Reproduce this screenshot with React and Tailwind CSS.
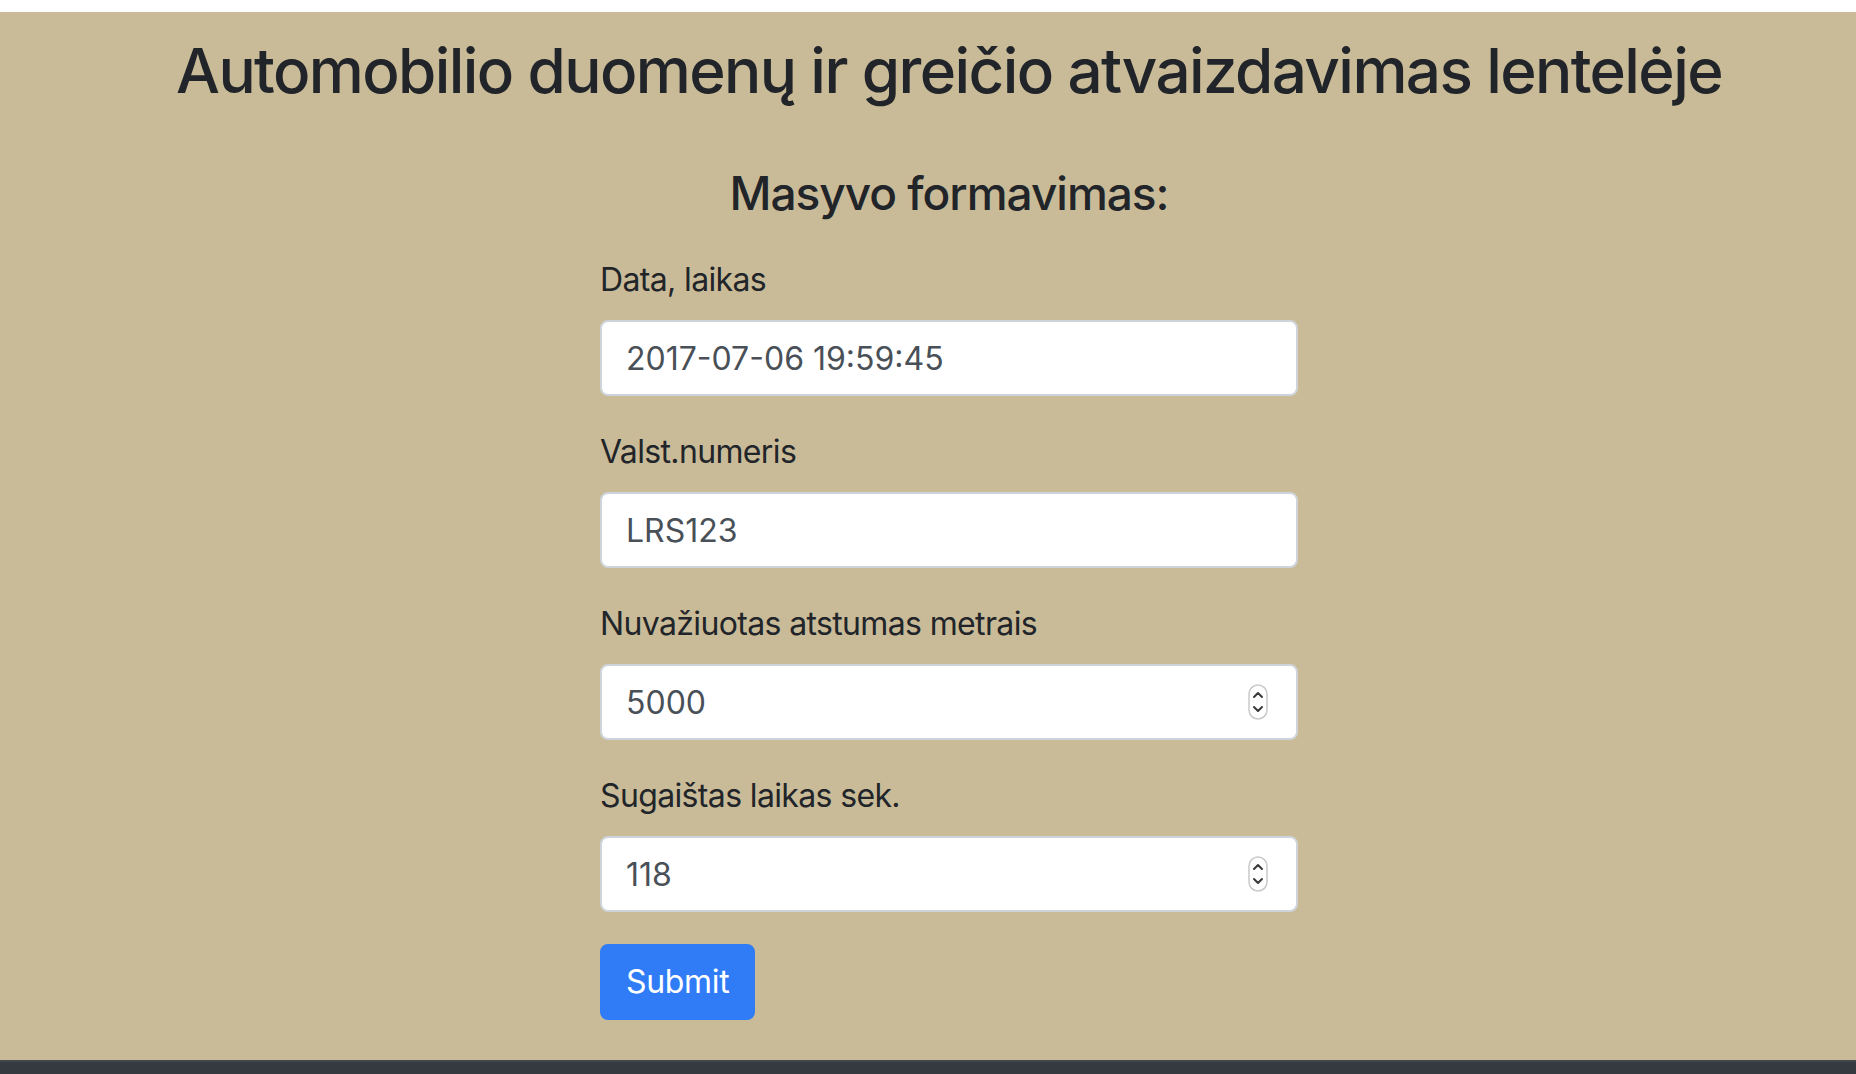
import React from "react";

const fields = [
  { label: "Data, laikas", value: "2017-07-06 19:59:45", number: false },
  { label: "Valst.numeris", value: "LRS123", number: false },
  { label: "Nuvažiuotas atstumas metrais", value: "5000", number: true },
  { label: "Sugaištas laikas sek.", value: "118", number: true },
];

function Stepper() {
  return (
    <svg
      className="absolute right-[30px] top-1/2 -translate-y-1/2"
      width="20"
      height="36"
      viewBox="0 0 20 36"
    >
      <rect x="1" y="1" width="18" height="34" rx="9" fill="#fff" stroke="#c9c9c9" strokeWidth="1.5" />
      <path d="M6 13 L10 9 L14 13" fill="none" stroke="#3a3a3a" strokeWidth="2" strokeLinecap="round" strokeLinejoin="round" />
      <path d="M6 23 L10 27 L14 23" fill="none" stroke="#3a3a3a" strokeWidth="2" strokeLinecap="round" strokeLinejoin="round" />
    </svg>
  );
}

export default function App() {
  return (
    <div className="min-h-screen flex flex-col font-['Inter','Liberation_Sans',sans-serif] text-[#212529]">
      <div className="h-[12px] bg-white"></div>
      <div className="flex-1 bg-[#cabb98] pl-[42px] pt-[20px] pb-[40px]">
        <h1 className="text-center text-[62px] leading-[77px] font-medium tracking-[-0.026em]">
          Automobilio duomenų ir greičio atvaizdavimas lentelėje
        </h1>
        <h2 className="mt-[55px] text-center text-[46px] leading-[58px] font-medium tracking-[-0.022em]">
          Masyvo formavimas:
        </h2>
        <form className="mx-auto mt-[34px] w-[698px]" onSubmit={(e) => e.preventDefault()}>
          {fields.map((f, i) => (
            <div key={i} className="mb-[32px]">
              <label className="block mb-[16px] text-[32px] leading-[48px] tracking-[-0.02em]">{f.label}</label>
              <div className="relative">
                <input
                  type="text"
                  readOnly
                  defaultValue={f.value}
                  className="block w-full h-[76px] px-[24px] py-[12px] text-[32px] leading-[48px] text-[#495057] bg-white border-2 border-[#ced4da] rounded-[8px] outline-none"
                />
                {f.number && <Stepper />}
              </div>
            </div>
          ))}
          <button
            type="submit"
            className="h-[76px] px-[24px] text-[32px] leading-[48px] tracking-[-0.01em] text-white bg-[#2f7cf6] border-2 border-[#2f7cf6] rounded-[8px]"
          >
            Submit
          </button>
        </form>
      </div>
      <div className="h-[14px] bg-[#343a40] border-t-2 border-[#41474d]"></div>
    </div>
  );
}
